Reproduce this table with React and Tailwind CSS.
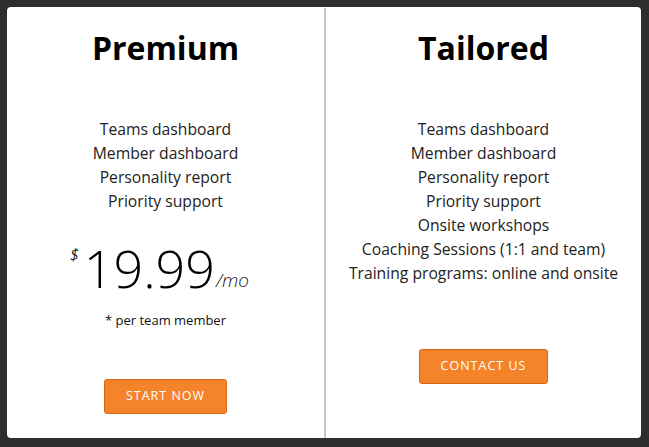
import React from "react";

const premium = [
  "Teams dashboard",
  "Member dashboard",
  "Personality report",
  "Priority support",
];

const tailored = [
  ...premium,
  "Onsite workshops",
  "Coaching Sessions (1:1 and team)",
  "Training programs: online and onsite",
];

function Features({ items }) {
  return (
    <ul className="mt-[45px] text-[15.7px] leading-[24px] text-[#222]">
      {items.map((item) => (
        <li key={item}>{item}</li>
      ))}
    </ul>
  );
}

function OrangeButton({ children, className }) {
  return (
    <button
      className={
        "h-[35px] rounded-[3px] border border-[#d5691b] bg-[#f5832a] text-[12.5px] tracking-[1px] text-white " +
        className
      }
    >
      {children}
    </button>
  );
}

export default function App() {
  return (
    <div
      className="h-[447px] w-[649px] bg-[#2e2e2e] pt-[7px] pl-[7px]"
      style={{ fontFamily: '"Open Sans", "Liberation Sans", sans-serif' }}
    >
      <div className="flex h-[431px] w-[634px] rounded-[4px] bg-white">
        <section className="flex w-[317px] flex-col items-center pt-[17px] text-center">
          <h2 className="text-[32px] font-bold leading-[48px] text-black">Premium</h2>
          <Features items={premium} />
          <div className="mt-[28px] flex items-start pr-[12px]">
            <span className="mt-[5px] mr-[5px] text-[16px] italic leading-none text-[#222]">$</span>
            <span className="text-[52px] font-light leading-[53px] text-black">19.99</span>
            <span className="mt-[30px] ml-[1px] text-[19px] font-light italic leading-none text-[#222]">
              /mo
            </span>
          </div>
          <p className="mt-[16px] text-[13px] leading-[20px] text-[#111]">* per team member</p>
          <OrangeButton className="mt-[49px] w-[123px]">START NOW</OrangeButton>
        </section>
        <div className="mt-[1px] w-[2px] bg-[#c4c4c4]" />
        <section className="flex flex-1 flex-col items-center pt-[17px] text-center">
          <h2 className="text-[32px] font-bold leading-[48px] text-black">Tailored</h2>
          <Features items={tailored} />
          <OrangeButton className="mt-[64px] w-[129px]">CONTACT US</OrangeButton>
        </section>
      </div>
    </div>
  );
}
